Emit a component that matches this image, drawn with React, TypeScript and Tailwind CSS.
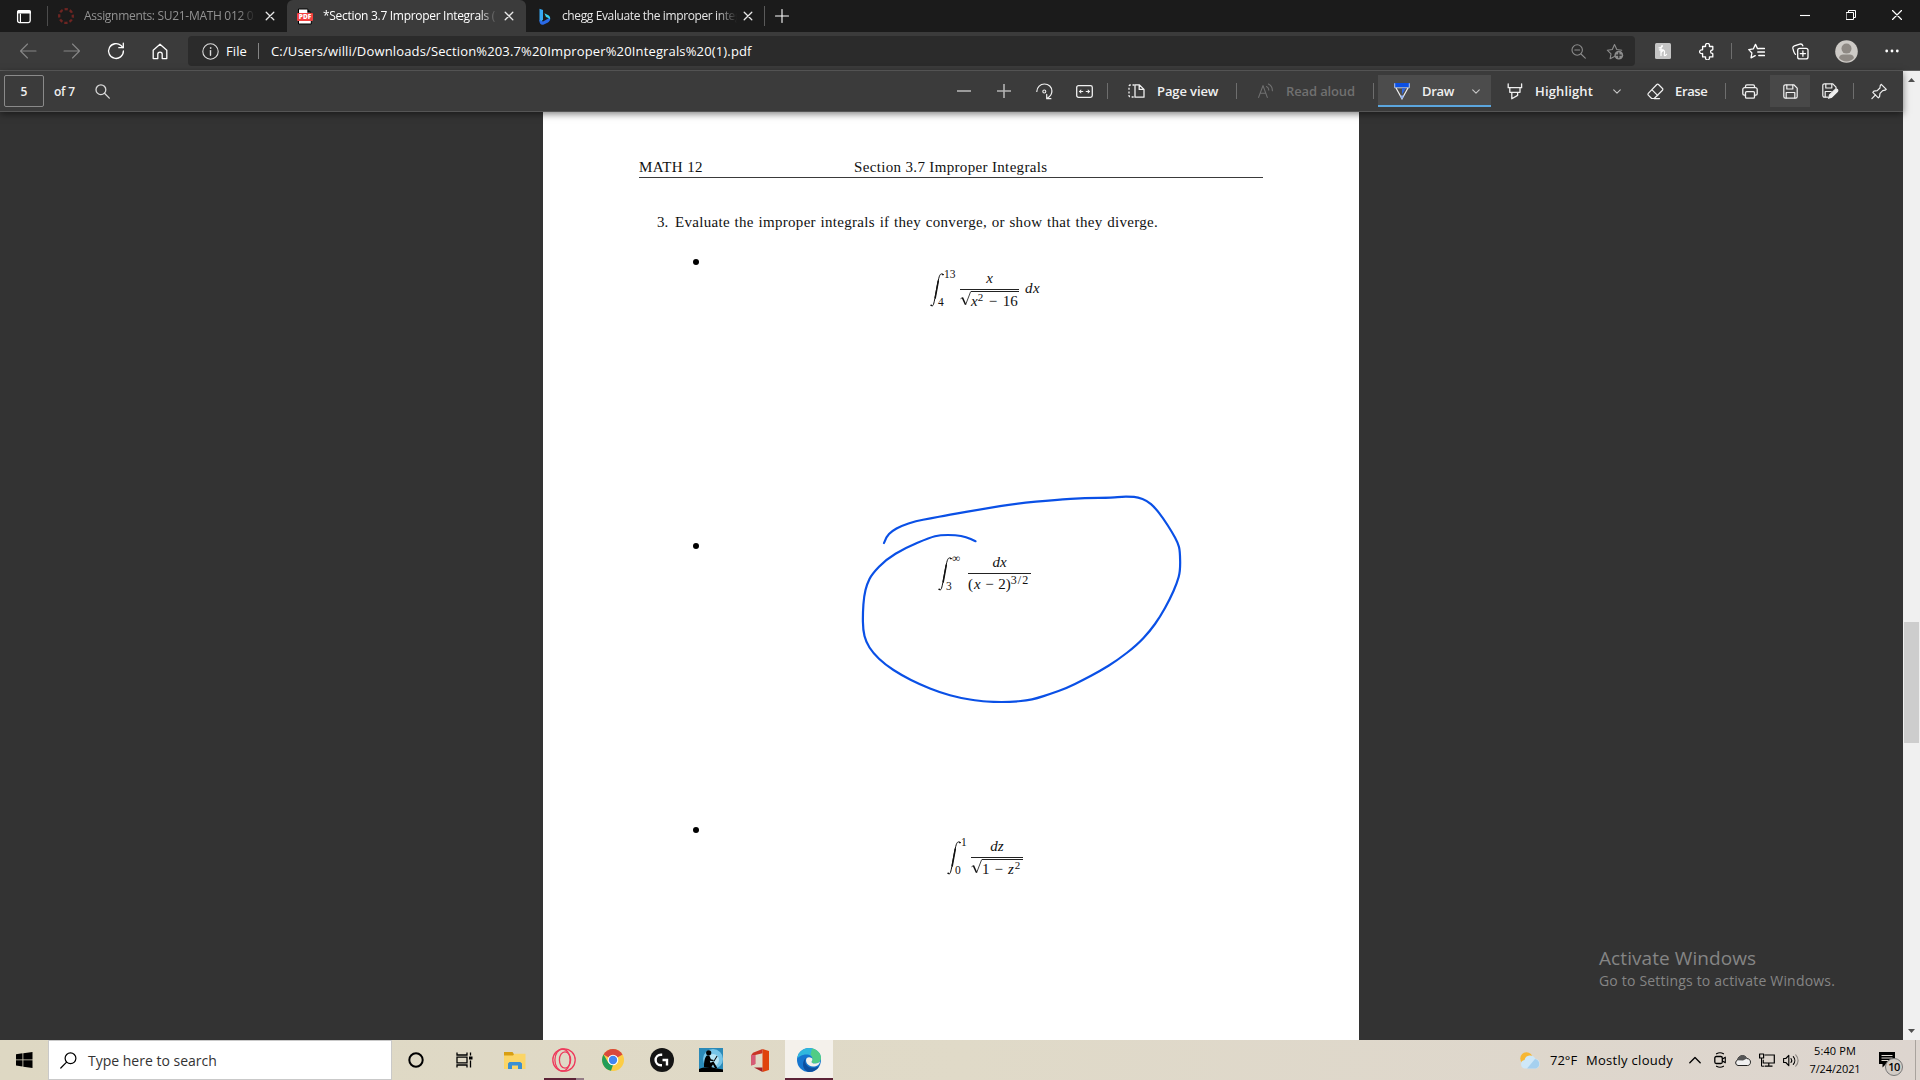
import type { ReactNode } from 'react';

interface IconProps {
  w?: number;
  h?: number;
  className?: string;
  children: ReactNode;
}

/** Thin outline icon, one viewBox unit per pixel */
function Icon({ w = 16, h = 16, className = '', children }: IconProps) {
  return (
    <svg
      width={w}
      height={h}
      viewBox={`0 0 ${w} ${h}`}
      fill="none"
      stroke="currentColor"
      strokeWidth={1.1}
      strokeLinecap="round"
      strokeLinejoin="round"
      className={`shrink-0 ${className}`}
    >
      {children}
    </svg>
  );
}

function Separator({ className = '' }: { className?: string }) {
  return <div className={`w-px h-4 shrink-0 bg-[#6e6e6e] ${className}`} />;
}

function CloseIcon({ className = '' }: { className?: string }) {
  return (
    <Icon w={10} h={10} className={`text-[#e8e8e8] ${className}`}>
      <path d="M1.2 1.2l7.6 7.6M8.8 1.2L1.2 8.8" strokeWidth={1.3} />
    </Icon>
  );
}

function Chevron({ className = '' }: { className?: string }) {
  return (
    <Icon w={8} h={5} className={`text-[#c8c8c8] ${className}`}>
      <path d="M.7.8L4 4.1 7.3.8" />
    </Icon>
  );
}

function TitleBar() {
  return (
    <div className="flex h-8 items-center bg-[#1b1b1b] text-[12px] tracking-[-0.3px]">
      <Icon className="ml-4 text-white" w={16} h={15}>
        <rect x="1.6" y="1.6" width="12.6" height="12" rx="1.8" strokeWidth={1.3} />
        <path d="M1 4.6V3a2 2 0 012-2h10a2 2 0 012 2v1.6z" fill="currentColor" stroke="none" />
        <path d="M4.4 5v8.5" strokeWidth={1.2} />
      </Icon>
      <div className="ml-[15px] h-5 w-px bg-[#4c4c4c]" />

      {/* Inactive Canvas tab */}
      <div className="flex h-8 w-[239px] items-center rounded-br-md">
        <Icon className="ml-[10px] text-[#6e2522]">
          <circle
            cx="8"
            cy="8"
            r="6.8"
            strokeWidth={2.3}
            strokeLinecap="butt"
            strokeDasharray="3.3 2.04"
            strokeDashoffset={1.65}
          />
        </Icon>
        <span className="ml-[10px] w-[172px] overflow-hidden whitespace-nowrap text-[#929292] [mask-image:linear-gradient(to_right,#000_90%,transparent)]">
          Assignments: SU21-MATH 012 01
        </span>
        <CloseIcon className="ml-[9px]" />
      </div>

      {/* Active PDF tab */}
      <div className="flex h-8 w-[239px] items-center rounded-t-md bg-[#3b3b3b] text-white">
        <svg width="16" height="17" viewBox="0 0 16 17" className="ml-[10px] shrink-0">
          <path d="M1.5 1h8.8l4 3.8V16h-12.8z" fill="#fff" stroke="#000" strokeWidth="1" />
          <path d="M10.3 1l4 3.8h-4z" fill="#000" />
          <rect y="5" width="16" height="8" rx="1" fill="#f3403f" />
          <text
            x="8"
            y="11.4"
            textAnchor="middle"
            className="fill-white font-['Open_Sans',sans-serif] text-[6.5px] font-extrabold tracking-normal"
          >
            PDF
          </text>
        </svg>
        <span className="ml-[10px] w-[174px] overflow-hidden whitespace-nowrap [mask-image:linear-gradient(to_right,#000_90%,transparent)]">
          *Section 3.7 Improper Integrals (1
        </span>
        <CloseIcon className="ml-[7px]" />
      </div>

      {/* Bing tab */}
      <div className="flex h-8 w-[238px] items-center">
        <svg width="12" height="17" viewBox="0 0 12 17" className="ml-[13px] shrink-0">
          <path d="M.5.8L4 2.1v9.5L1.7 14.7.5 13z" fill="#36a8f4" />
          <path d="M.5 12l3.5 1.6L11 9.5c.6 2.3-.3 4-2 5L4.3 16.7C2 17.4.5 15.5.5 13z" fill="#2a6ae8" />
          <path d="M5.4 5.3l4 1.9c1.4.8 2 2.2 1.7 4L8.8 9.8 7 9z" fill="#38cfee" />
        </svg>
        <span className="ml-[11px] w-[175px] overflow-hidden whitespace-nowrap text-[#e6e6e6] tracking-[-0.38px] [mask-image:linear-gradient(to_right,#000_88%,transparent)]">
          chegg Evaluate the improper integ
        </span>
        <CloseIcon className="ml-[6px]" />
      </div>
      <div className="h-5 w-px bg-[#5a5a5a]" />
      <Icon w={14} h={14} className="ml-[10px] text-white">
        <path d="M7 .5v13M.5 7h13" />
      </Icon>

      {/* Window controls */}
      <div className="ml-auto mt-[-3px] flex items-center pr-[18px] text-white">
        <Icon w={10} h={10}>
          <path d="M0 5.5h10" strokeLinecap="butt" />
        </Icon>
        <Icon w={10} h={10} className="ml-[36px]">
          <path d="M.5 2.5h7v7h-7zM2.5 2.5v-2h7v7h-2" strokeLinejoin="miter" strokeWidth={1} />
        </Icon>
        <Icon w={10} h={10} className="ml-[36px]">
          <path d="M.5.5l9 9M9.5.5l-9 9" strokeWidth={1.2} />
        </Icon>
      </div>
    </div>
  );
}

function AddressBar() {
  return (
    <div className="flex h-[38px] items-center bg-[#3b3b3b] text-white">
      <Icon w={18} h={16} className="ml-[19px] text-[#868686]">
        <path d="M17 8H1.5M8.5 1L1.5 8l7 7" />
      </Icon>
      <Icon w={18} h={16} className="ml-[26px] text-[#868686]">
        <path d="M1 8h15.5M9.5 1l7 7-7 7" />
      </Icon>
      <Icon w={18} h={18} className="ml-[26px]">
        <path d="M16.4 9A7.4 7.4 0 1114 3.6l2 1.9" strokeWidth={1.3} />
        <path d="M16.3 1.2v4.5h-4.5" strokeWidth={1.3} />
      </Icon>
      <Icon w={16} h={17} className="ml-[27px]">
        <path
          d="M1.2 7.2L8 1.3l6.8 5.9v8.4h-4.6v-4.3a2.2 2.2 0 00-4.4 0v4.3H1.2z"
          strokeWidth={1.3}
        />
      </Icon>

      <div className="ml-5 flex h-[30px] w-[1447px] items-center rounded bg-[#2b2b2b]">
        <Icon w={17} h={17} className="ml-[14px] text-[#dcdcdc]">
          <circle cx="8.5" cy="8.5" r="7.7" />
          <path d="M8.5 7.6v4.6" strokeWidth={1.4} />
          <circle cx="8.5" cy="5" r=".5" fill="currentColor" strokeWidth={0.7} />
        </Icon>
        <span className="ml-[7px] pt-[2px] text-[13px] tracking-[0.11px]">File</span>
        <div className="ml-[11px] h-4 w-px bg-[#858585]" />
        <span className="ml-3 pt-[2px] whitespace-nowrap text-[13px] tracking-[0.15px]">
          C:/Users/willi/Downloads/Section%203.7%20Improper%20Integrals%20(1).pdf
        </span>
        <Icon w={15} h={15} className="ml-auto text-[#8c8c8c]">
          <circle cx="6.2" cy="6" r="5.2" />
          <path d="M10 10l4.3 4.2M3.8 6h4.8" />
        </Icon>
        <Icon w={18} h={17} className="ml-[20px] mr-[11px] text-[#8c8c8c]">
          <path d="M8.5 13.6l-4.4 2.2.9-5L1.3 7.2l5-.7L8.5 1.6l2.3 4.9 5 .7" />
          <circle cx="12.8" cy="12.2" r="4.4" fill="currentColor" stroke="none" />
          <path d="M12.8 9.8v4.8M10.4 12.2h4.8" stroke="#2b2b2b" strokeWidth={1.2} />
        </Icon>
      </div>

      {/* Extensions and profile */}
      <svg width="16" height="16" viewBox="0 0 16 16" className="ml-5 shrink-0">
        <rect width="16" height="16" rx="1.5" fill="#c4c4c4" />
        <path
          d="M4 4.8C6 5 7.6 3.8 7.4 2.8 7.2 2 6 3 6 6v6.5M6 9.8c1-2.3 3.2-3 3.5-1.5.3 1.5-.8 4.3.3 4.3.8 0 1.3-.5 1.8-1.3M4.3 6.8h4"
          fill="none"
          stroke="#fff"
          strokeWidth="1.2"
          strokeLinecap="round"
        />
      </svg>
      <Icon w={16} h={17} className="ml-[28px]">
        <path
          d="M3.6 3.5h2.7c.2 0 .4-.2.3-.5a2 2 0 113.8 0c-.1.3.1.5.3.5h3.1V6.500c0 .3-.2.5-.5.5a1.700 1.700 0 000 3.400c.3 0 .5.2.5.5v3h-3.100c-.2 0-.4.2-.3.4a2 2 0 11-3.800 0c.1-.2-.1-.4-.3-.4H3.600v-3.100c0-.3-.2-.4-.5-.3a1.900 1.900 0 110-3.600c.3.1.5 0 .5-.3z"
          strokeWidth={1.3}
        />
      </Icon>
      <Separator className="ml-4" />
      <Icon w={17} h={16} className="ml-4">
        <path d="M7.2 12.6L3 14.8l.9-4.8L.8 6.6l4.6-.8L7.5 1.4l2 4.2h1.2" strokeWidth={1.3} />
        <path d="M10.8 5.5h5.6M9.8 9h6.6M10.8 12.5h5.6" strokeWidth={1.4} />
      </Icon>
      <Icon w={17} h={17} className="ml-[27px]">
        <rect x="5.7" y="5.3" width="10.3" height="10.6" rx="2" strokeWidth={1.3} />
        <path d="M10.9 8v5.2M8.3 10.6h5.2" strokeWidth={1.3} />
        <path d="M3.5 11.4C2.3 11 1.4 7.5.9 5.4.6 4 1.2 3.2 2.4 2.8l5.4-1.7c1.5-.4 2.5 0 3 1.7" strokeWidth={1.3} />
      </Icon>
      <svg width="23" height="23" viewBox="0 0 23 23" className="ml-[26px] shrink-0">
        <circle cx="11.5" cy="11.5" r="11.3" fill="#cdcac6" />
        <circle cx="11.5" cy="8.6" r="5" fill="#8e8984" />
        <path d="M4 18c.5-3 2.4-3.6 4-3.6h7c1.6 0 3.5.6 4 3.6a10 10 0 01-15 0z" fill="#8e8984" />
      </svg>
      <svg width="14" height="4" viewBox="0 0 14 4" fill="#fff" className="ml-[27px] shrink-0">
        <circle cx="1.7" cy="2" r="1.4" />
        <circle cx="7" cy="2" r="1.4" />
        <circle cx="12.3" cy="2" r="1.4" />
      </svg>
    </div>
  );
}

function PdfToolbar() {
  return (
    <div className="relative z-10 flex h-[41px] items-center border-b border-[#555] bg-[#3b3b3b] text-[13px] font-semibold text-[#f0f0f0] shadow-[0_2px_7px_rgba(0,0,0,0.5)]">
      <div className="ml-1 flex h-8 w-10 items-center justify-center rounded-[2px] border border-[#8a8a8a] pt-px text-[12px]">
        5
      </div>
      <span className="ml-[10px] w-[22px] pt-px whitespace-nowrap text-[12px] tracking-[-0.2px]">of 7</span>
      <Icon w={15} h={15} className="ml-[19px] text-[#d8d8d8]">
        <circle cx="5.9" cy="5.7" r="4.9" strokeWidth={1.3} />
        <path d="M9.5 9.3l4.8 4.8" strokeWidth={1.3} />
      </Icon>

      <Icon w={14} h={14} className="ml-[847px] text-[#b4b4b4]">
        <path d="M0 7h14" strokeWidth={1.6} strokeLinecap="butt" />
      </Icon>
      <Icon w={14} h={14} className="ml-[26px] text-[#b4b4b4]">
        <path d="M0 7h14M7 0v14" strokeWidth={1.6} strokeLinecap="butt" />
      </Icon>
      <Icon w={17} h={17} className="ml-[25px]">
        <path d="M.8 8.5C1 4 4.3 1 8.4 1c4.3 0 7.5 3.1 7.5 7.1 0 3-1.6 5.5-4.4 7" strokeWidth={1.2} />
        <path d="M10.7 11.4v4.3h4.2" strokeWidth={1.2} />
        <circle cx="8.3" cy="8.5" r="1.5" />
      </Icon>
      <Icon w={17} h={13} className="ml-[23px]">
        <rect x=".7" y=".7" width="15.6" height="11.6" rx="1.8" strokeWidth={1.3} />
        <path d="M3.8 6.5h3M13.2 6.5h-3" />
        <path d="M5.2 4.2L2.8 6.5l2.4 2.3zM11.8 4.2l2.4 2.3-2.4 2.3z" fill="currentColor" stroke="none" />
      </Icon>
      <Separator className="ml-[14px]" />
      <Icon w={17} h={14} className="ml-5">
        <path
          d="M6.5 1H2.4A1.4 1.4 0 001 2.4v9.2A1.4 1.4 0 002.4 13h4.1"
          strokeDasharray="2 1.7"
          strokeLinecap="butt"
          strokeWidth={1.3}
        />
        <path d="M7 .8h4.2l4.8 4.6v7.8H7zM11.2.8v4.6H16" strokeWidth={1.3} />
      </Icon>
      <span className="ml-3 w-[62px] pt-px whitespace-nowrap tracking-[-0.1px]">Page view</span>
      <Separator className="ml-[17px]" />
      <Icon w={16} h={16} className="ml-[21px] text-[#707070]">
        <path d="M.6 14.4L5 2.6l4.3 11.8M2.2 10.3h5.5" />
        <path d="M8.5 3.5c1.5.7 2.3 2 2.3 3.6M10.4 1c2.6 1.3 4 3.5 4 6.7" />
      </Icon>
      <span className="ml-3 w-[69px] pt-px whitespace-nowrap tracking-[-0.13px] text-[#707070]">Read aloud</span>
      <Separator className="ml-[18px]" />

      {/* Selected ink tool */}
      <div className="ml-1 flex h-8 w-[113px] items-center border-b-2 border-[#5ba6de] bg-[#4c4c4c]">
        <svg width="16" height="17" viewBox="0 0 16 17" fill="none" className="ml-4 mt-[2px] shrink-0">
          <path d="M0 0h16v4.5H0z" fill="#0a50e6" />
          <path d="M.7.3v4.5h14.6V.3" stroke="#b9c6dc" strokeWidth="1" />
          <path d="M8 11.5V5h4z" fill="#3067e0" />
          <path d="M2 5l6 10.8L14 5" stroke="#f0f0f0" strokeWidth="1.2" />
          <path d="M6 12.5h4L8 16.4z" fill="#8eb0f0" />
        </svg>
        <span className="ml-3 mt-[3px] w-8 whitespace-nowrap tracking-[-0.3px]">Draw</span>
        <Chevron className="ml-[18px] mt-[2px]" />
      </div>
      <Icon w={16} h={17} className="ml-4">
        <path d="M1.2.8v3.9h13.4V.8M2.8 4.7v4.6h10.2V4.7M4.8 9.3v6.5l5.8-3.4V9.3" strokeWidth={1.3} />
      </Icon>
      <span className="ml-[12px] w-[58px] pt-px whitespace-nowrap tracking-[0.14px]">Highlight</span>
      <Chevron className="ml-[20px]" />
      <Icon w={17} h={17} className="ml-[26px]">
        <path
          d="M9.8 1.5a1.2 1.2 0 011.7 0l4 4a1.2 1.2 0 010 1.7l-8.3 8.3H4.6L1.3 12.1a1.2 1.2 0 010-1.7zM4.8 6.6l6 6M7.2 15.6h5.3"
          strokeWidth={1.2}
        />
      </Icon>
      <span className="ml-[11px] w-[33px] pt-px whitespace-nowrap tracking-[-0.35px]">Erase</span>
      <Separator className="ml-[17px]" />
      <Icon w={16} h={15} className="ml-4">
        <path
          d="M3.5 3.6V2.2A1.4 1.4 0 014.9.8h6.2a1.4 1.4 0 011.4 1.4v1.4M3.5 11.2H2.2A1.4 1.4 0 01.8 9.8V5.500a1.9 1.9 0 011.9-1.9h10.6a1.9 1.9 0 011.9 1.9v4.3a1.4 1.4 0 01-1.4 1.4h-1.3"
          strokeWidth={1.3}
        />
        <rect x="3.5" y="7.6" width="9" height="6.6" rx="1.2" strokeWidth={1.3} />
      </Icon>
      <div className="ml-[12px] flex h-8 w-10 items-center justify-center bg-[#484848]">
        <Icon w={15} h={15}>
          <path
            d="M.8 2.4A1.6 1.6 0 012.4.8h8.4l3.4 3.3v8.5a1.6 1.6 0 01-1.6 1.6H2.4a1.6 1.6 0 01-1.6-1.6z"
            strokeWidth={1.2}
          />
          <path d="M3.8 1v4h6V1M3.2 14V8.5h8.6V14" strokeWidth={1.2} />
        </Icon>
      </div>
      <Icon w={17} h={16} className="ml-[12px]">
        <path d="M5.5 14.2H2.4a1.6 1.6 0 01-1.6-1.6V2.4A1.6 1.6 0 012.4.8h8.4l3.2 3.3v1.8" strokeWidth={1.2} />
        <path d="M3.8 1v4h6V1M3.2 14V8.5h6" strokeWidth={1.2} />
        <path d="M6.5 15.3l1-3.4 5.7-5.4a1.5 1.5 0 012.2 2.2L9.8 14.2z" fill="currentColor" />
      </Icon>
      <Separator className="ml-[14px]" />
      <Icon w={17} h={17} className="ml-[17px]">
        <path
          d="M10.3 1.3l5 5-1.2.9-2.4.5-2.7 2.7-.5 3.4-1.2 1-5.5-5.5 1.1-1.1 3.3-.5 2.7-2.7.4-2.5zM4.500 11.9L.9 15.6"
          strokeWidth={1.2}
        />
      </Icon>
    </div>
  );
}

/** Large integral sign */
function IntegralSign() {
  return (
    <svg width="14" height="34" viewBox="0 0 14 34" fill="none" stroke="#111" strokeLinecap="round">
      <path d="M.9 32.2c.8 1.3 2 1 2.6-.8C5.2 26 7.5 8.5 9.4 3.2 10.2.8 11.8.2 13 1.5" strokeWidth="1" />
      <path d="M5.2 25L8.3 8" strokeWidth="1.5" />
      <circle cx="1.2" cy="32.3" r=".4" fill="#111" />
      <circle cx="12.8" cy="1.6" r=".4" fill="#111" />
    </svg>
  );
}

function Radical({ children }: { children: ReactNode }) {
  return (
    <div className="flex">
      <svg width="11" height="16" viewBox="0 0 11 16" fill="none" stroke="#111" className="shrink-0">
        <path d="M.5 8.8l2-1.3" strokeWidth=".8" />
        <path d="M2.4 7.6l3.1 6.9" strokeWidth="1.5" />
        <path d="M5.5 15L10.7 1.5" strokeWidth=".8" />
      </svg>
      <div className="mt-px grow border-t border-[#222] leading-[14px] whitespace-nowrap">{children}</div>
    </div>
  );
}

interface IntegralProps {
  lower: string;
  upper: string;
  numerator: string;
  denominator: ReactNode;
  /** Width of the column that holds the limits */
  limits: string;
  /** Fraction bar width */
  fraction: string;
  tail?: string;
  className: string;
}

function Integral({ lower, upper, numerator, denominator, limits, fraction, tail, className }: IntegralProps) {
  return (
    <div className={`mt-[37px] flex items-start text-[15px] ${className}`}>
      <div className="mt-1">
        <IntegralSign />
      </div>
      <div className={`text-[11.5px] leading-[11px] whitespace-nowrap ${limits}`}>
        <div>{upper}</div>
        <div className="mt-[17px] -ml-[6px]">{lower}</div>
      </div>
      <div className={`mt-px ${fraction}`}>
        <div className="text-center leading-4 italic">{numerator}</div>
        <div className="mt-[3px] h-px bg-[#222]" />
        {denominator}
      </div>
      {tail && <div className="mt-[11px] ml-[6px] leading-4 italic tracking-[0.6px]">{tail}</div>}
    </div>
  );
}

function Bullet({ children }: { children: ReactNode }) {
  return (
    <li className="flex h-[284px] pl-[150px]">
      <div className="mt-[27px] size-[6px] shrink-0 rounded-full bg-black" />
      {children}
    </li>
  );
}

const inkPoints = [
  [884, 543], [886, 537], [892, 531], [901, 526], [916, 521], [930, 518.5], [948, 515], [984, 508.8],
  [1016, 503.5], [1056, 499.8], [1085, 498], [1113, 497.8], [1122, 496.6], [1130, 496.6], [1138, 497.3],
  [1147, 500.7], [1155, 507.7], [1163, 518], [1172, 532], [1178, 543], [1180, 551], [1180.3, 571],
  [1177, 583], [1170, 599], [1160, 617], [1150, 631], [1137, 645], [1117, 660.5], [1100, 671],
  [1083, 680], [1067, 688], [1050, 694], [1037, 698.3], [1027, 700.5], [1010, 702], [993, 702],
  [980, 701], [960, 698], [940, 692.5], [920, 684.5], [902, 675.5], [885, 664.5], [873, 653],
  [866, 642], [863, 630], [862.8, 613], [864, 596], [867, 584], [872, 574], [886, 559.5], [905, 548],
  [930, 537.5], [940, 535], [956, 535], [966, 537], [975.5, 541.2],
];

function toPath(points: number[][]) {
  let d = `M${points[0][0]} ${points[0][1]}`;
  for (let i = 1; i < points.length - 1; i++) {
    const [x, y] = points[i];
    const [nx, ny] = points[i + 1];
    d += `Q${x} ${y} ${(x + nx) / 2} ${(y + ny) / 2}`;
  }
  const last = points[points.length - 1];
  return `${d}L${last[0]} ${last[1]}`;
}

function PdfPage() {
  return (
    <div className="relative ml-[543px] h-[928px] w-[816px] bg-white font-['Liberation_Serif',serif] text-[15px] text-[#111]">
      <div className="flex h-[66px] pt-[45px] mx-[96px] border-b border-[#3a3a3a] leading-5 whitespace-nowrap">
        <span className="w-16 tracking-[0.39px]">MATH 12</span>
        <span className="ml-[151px] tracking-[0.34px]">Section 3.7 Improper Integrals</span>
      </div>
      <div className="mt-[34px] flex pl-[114px] leading-5 whitespace-nowrap">
        <span className="w-[18px]">3.</span>
        <span className="tracking-[0.3px] [word-spacing:0.65px]">
          Evaluate the improper integrals if they converge, or show that they diverge.
        </span>
      </div>
      <ul className="h-[808px] overflow-hidden">
        <Bullet>
          <Integral
            className="ml-[231px]"
            lower="4"
            upper="13"
            numerator="x"
            limits="w-[16px]"
            fraction="w-[59px]"
            tail="dx"
            denominator={
              <Radical>
                <i>x</i>
                <span className="align-[5px] text-[11px] leading-none">2</span>
                <span className="mx-[5.5px]">−</span>16
              </Radical>
            }
          />
        </Bullet>
        <Bullet>
          <Integral
            className="ml-[239px]"
            lower="3"
            upper="∞"
            numerator="dx"
            limits="w-[16px]"
            fraction="w-[63px]"
            denominator={
              <div className="leading-4 whitespace-nowrap">
                (<i className="ml-px">x</i>
                <span className="mx-[4.5px]">−</span>2)
                <span className="align-[5px] text-[12px] leading-none tracking-[1.2px]">3/2</span>
              </div>
            }
          />
        </Bullet>
        <Bullet>
          <Integral
            className="ml-[248px]"
            lower="0"
            upper="1"
            numerator="dz"
            limits="w-[10px]"
            fraction="w-[52px]"
            denominator={
              <Radical>
                1<span className="mx-[5px]">−</span>
                <i>z</i>
                <span className="ml-px align-[5px] text-[11px] leading-none">2</span>
              </Radical>
            }
          />
        </Bullet>
      </ul>

      {/* Pen stroke laid over the page */}
      <svg viewBox="543 112 816 928" className="absolute inset-0 size-full">
        <path d={toPath(inkPoints)} fill="none" stroke="#0a50e6" strokeWidth="2.2" strokeLinecap="round" />
      </svg>
    </div>
  );
}

function ScrollBar() {
  return (
    <div className="flex w-[17px] flex-col items-center bg-[#f0f0f0]">
      <svg width="7" height="4" viewBox="0 0 7 4" fill="#505050" className="mt-[7px]">
        <path d="M0 4L3.5 0 7 4z" />
      </svg>
      <div className="mt-[540px] h-[121px] w-[15px] bg-[#cdcdcd]" />
      <svg width="7" height="4" viewBox="0 0 7 4" fill="#505050" className="mt-auto mb-[7px]">
        <path d="M0 0l3.5 4L7 0z" />
      </svg>
    </div>
  );
}

function Taskbar() {
  return (
    <div className="flex h-10 items-center bg-linear-to-r from-[#ded8c3] via-[#e0dac8] to-[#ddd5cf] text-black">
      <svg width="17" height="16" viewBox="0 0 17 16" className="ml-4 shrink-0">
        <path d="M0 2.2l6.5-.9v6.2H0zM7.3 1.2L16.5 0v7.5H7.3zM0 8.3h6.5v6.2L0 13.6zM7.3 8.3h9.2V16l-9.2-1.3z" />
      </svg>
      <div className="ml-[15px] flex h-10 w-[344px] items-center border border-[#c9c9c9] bg-white">
        <Icon w={17} h={17} className="ml-[11px]">
          <circle cx="10.5" cy="6.3" r="5.4" strokeWidth={1.2} />
          <path d="M6.6 10.2L.8 16" strokeWidth={1.2} />
        </Icon>
        <span className="ml-[11px] text-[14px] text-[#333]">Type here to search</span>
      </div>
      <Icon w={16} h={16} className="ml-4">
        <circle cx="8" cy="8" r="6.7" strokeWidth={2} />
      </Icon>
      <Icon w={17} h={16} className="ml-8">
        <path
          d="M1 .5V3h10V.5M1 15.5V13h10v2.5M1 5.2h10v5.6H1zM14.5.5v3M14.5 8.5v7"
          strokeWidth={1.3}
          strokeLinecap="butt"
          strokeLinejoin="miter"
        />
        <rect x="13" y="4.5" width="3.5" height="3" fill="#000" stroke="none" />
      </Icon>

      {/* File Explorer */}
      <svg width="22" height="19" viewBox="0 0 22 19" className="ml-[31px] shrink-0">
        <path d="M0 1h8.5l1.5 2.2V7H0z" fill="#d89e12" />
        <path d="M0 4.5h9l1.5-1.7h11V18H0z" fill="#fbd567" />
        <path d="M4 18v-5.5l1.5-1.5h10.8l1.7 1.5V18h-4v-3.4H8V18z" fill="#3a8fd3" />
      </svg>

      {/* Opera */}
      <div className="ml-[18px] flex h-10 flex-col justify-end">
        <svg
          width="24"
          height="24"
          viewBox="0 0 24 24"
          fill="none"
          stroke="#ee3a5c"
          strokeWidth="1.3"
          className="ml-2"
        >
          <circle cx="12" cy="12" r="11.2" />
          <ellipse cx="10.5" cy="12" rx="7.6" ry="11" />
          <ellipse cx="13" cy="12" rx="5.6" ry="8.2" />
        </svg>
        <div className="mt-[6px] flex h-[2px]">
          <div className="w-8 bg-[#5c2337]" />
          <div className="w-2 bg-[#957c86]" />
        </div>
      </div>

      {/* Chrome */}
      <svg width="22" height="22" viewBox="0 0 22 22" className="ml-[18px] shrink-0">
        <circle cx="11" cy="11" r="11" fill="#fccd46" />
        <path d="M11 11L1.5 5.5A11 11 0 0120.5 5.5z" fill="#d8483c" />
        <path d="M1.5 5.5l4.8 8.2L11 16l-2 5.8A11 11 0 011.5 5.5z" fill="#229d58" />
        <circle cx="11" cy="11" r="5.3" fill="#fff" />
        <circle cx="11" cy="11" r="4.2" fill="#4486f0" />
      </svg>

      {/* Logitech G HUB */}
      <svg width="24" height="24" viewBox="0 0 24 24" fill="none" className="ml-[26px] shrink-0">
        <circle cx="12" cy="12" r="12" fill="#151515" />
        <path d="M12.2 6.8h-1.4a5.2 5.2 0 000 10.4h1.2M12.5 12h4.5v5.5" stroke="#fff" strokeWidth="2.4" />
      </svg>

      {/* Kindle */}
      <svg width="24" height="24" viewBox="0 0 24 24" className="ml-[25px] shrink-0">
        <rect width="24" height="24" fill="#2b8ab8" />
        <circle cx="14" cy="11" r="10" fill="#76c5e8" />
        <circle cx="14" cy="12" r="6" fill="#b5e4f5" />
        <path d="M0 24v-3c4-2 7-1.5 9-1.5l3-.5 6 1.5 6 1V24z" />
        <circle cx="9.7" cy="4.8" r="2.6" />
        <path d="M5 19c0-5 .5-9.5 3-11.5h2.3l1.6 3.7 2.8.8-.4 1.2-3.5-.5.7 2 3-1.2 4 6.8h-2.5l-2-3.8-2.4 3.8z" />
        <path d="M14.5 13l3.2-5.2.8.5-3.2 5.2z" />
      </svg>

      {/* Office */}
      <svg width="18" height="23" viewBox="0 0 18 23" className="ml-[28px] shrink-0">
        <path d="M11.5 0L18 2v19l-6.5 2z" fill="#e0430c" />
        <path d="M11.5 0L2 3.7.3 6v10.5l4-1.5V6l7.2-1.8z" fill="#c93526" />
        <path d="M.3 6v10.5l4-1.5V6z" fill="#d65b78" />
        <path d="M3 18.5h8.5V23z" fill="#a52226" />
      </svg>

      {/* Edge, focused window */}
      <div className="ml-4 flex h-10 w-12 flex-col justify-end bg-[#f4f1eb]">
        <svg width="24" height="24" viewBox="0 0 24 24" className="ml-3">
          <circle cx="12" cy="12" r="12" fill="#1676cf" />
          <path
            d="M.2 10.5C1 4.3 6 0 12 0c7 0 12 4.7 12 9.8 0 3.4-2.6 5.7-6 5.7-2.2 0-3.5-.8-3.5-1.5 0-.8 1-1 1-3 0-2.5-2.5-4.4-6.2-4.4C5 6.6 1.5 9 .2 10.5z"
            fill="#31b8dd"
          />
          <path
            d="M15 .4c5.2 1.2 9 5 9 9.4 0 3.4-2.6 5.7-6 5.7-2.2 0-3.5-.8-3.5-1.5 0-.8 1-1 1-3 0-2-.5-3-2-4z"
            fill="#5bd368"
            opacity=".75"
          />
          <path
            d="M9 10c-2.5 4 .5 9.8 6.5 9.8 3.3 0 5.3-1 6.8-1.6A12 12 0 0112 24C8.5 23.5 6 20 6 16.5c0-3 1.5-5.5 3-6.5z"
            fill="#0d4f9f"
          />
          <path
            d="M9.8 10c1.5-1.5 5.2-.8 5.6 1 0 2-.9 2.3-.9 3 0 1 1.8 1.7 4 1.5 1.8 0 3.5-.8 4.5-2-.3 3-3 5-7 5-5.5 0-8.5-5.5-6.2-8.5z"
            fill="#f4f1eb"
          />
        </svg>
        <div className="mt-[6px] h-[2px] bg-[#5c2337]" />
      </div>

      {/* Weather */}
      <svg width="21" height="17" viewBox="0 0 21 17" className="ml-auto shrink-0">
        <circle cx="6.5" cy="6.5" r="6.2" fill="#f7b733" />
        <path d="M5 16.5A4.3 4.3 0 014.5 8a5.8 5.8 0 0110.8-1.3A5 5 0 0116 16.5z" fill="#cfe8f8" />
        <path d="M7 16.5l8-9.6A5 5 0 0116 16.5z" fill="#a5d0ef" />
      </svg>
      <span className="ml-[9px] w-[27px] pt-[2px] text-[13px] whitespace-nowrap">72°F</span>
      <span className="ml-[9px] w-[87px] pt-[2px] text-[13px] tracking-[0.29px] whitespace-nowrap">
        Mostly cloudy
      </span>

      {/* Notification area */}
      <Icon w={12} h={8} className="ml-[16px]">
        <path d="M.8 6.8L6 1.5l5.2 5.3" strokeWidth={1.3} />
      </Icon>
      <Icon w={13} h={16} className="ml-[13px]">
        <path d="M2.5 1.8c2-1.2 5-1.2 7 0M2.5 14.2c2 1.2 5 1.2 7 0" />
        <rect x=".8" y="4.5" width="7.5" height="7" rx="1.5" strokeWidth={1.3} />
        <path d="M8.5 7l2.8-1.8v5.6L8.5 9" />
      </Icon>
      <svg width="16" height="11" viewBox="0 0 16 11" className="ml-[8px] shrink-0">
        <path
          d="M3 10.5a2.8 2.8 0 01-.5-5.4C3 2.3 5 .6 7.5.6c2 0 3.5 1 4.4 3 2.2 0 3.6 1.5 3.6 3.5 0 2-1.3 3.4-3 3.4z"
          fill="#f0f0f0"
          stroke="#222"
        />
        <path d="M2.5 5.2C3 2.3 5 .6 7.5.6c2 0 3.5 1 4.4 3L8 5.5z" fill="#555" />
      </svg>
      <Icon w={16} h={14} className="ml-2">
        <path
          d="M5.5 2h9.8v8H4.2V6.8M9.8 10v3M6 13.2h7.5"
          strokeLinecap="butt"
          strokeLinejoin="miter"
          strokeWidth={1.2}
        />
        <rect x=".6" y="1" width="4" height="4" strokeWidth={1.2} />
        <path d="M2.5 5v8.2h3" strokeLinecap="butt" strokeWidth={1} />
      </Icon>
      <Icon w={16} h={13} className="ml-2">
        <path d="M.6 4.5h2.2L5.8 1.3v10.4L2.8 8.5H.6z" />
        <path d="M8 4.5c.9 1.2.9 2.8 0 4M10.3 2.7c2 2.2 2 5.4 0 7.6" />
        <path d="M12.7.9c3.2 3.3 3.2 8 0 11.2" stroke="#8a8580" />
      </Icon>
      <div className="ml-[7px] flex w-[58px] flex-col text-center text-[11px] leading-[18px] whitespace-nowrap">
        <span className="tracking-[0.1px]">5:40 PM</span>
        <span className="tracking-[-0.12px]">7/24/2021</span>
      </div>
      <div className="relative ml-[15px] h-[30px] w-[25px]">
        <svg width="16" height="16" viewBox="0 0 16 16" className="mt-[7px]">
          <path d="M0 0h16v12H7l-3.5 3.500V12H0z" />
          <path d="M2.5 3.5h11M2.5 6h11M2.5 8.5h7" stroke="#e0dad2" strokeWidth="1" />
        </svg>
        <div className="absolute top-[13px] left-[6px] flex size-[18px] items-center justify-center rounded-full border border-[#777] bg-[#d2ccc6] text-[11px] font-semibold tracking-[-0.5px]">
          10
        </div>
      </div>
      <div className="ml-[11px] mr-1 h-10 w-px bg-[#a9a39d]" />
    </div>
  );
}

export default function App() {
  return (
    <div className="flex h-[1080px] w-[1920px] flex-col overflow-hidden bg-[#333] font-['Open_Sans','Noto_Sans',sans-serif]">
      <TitleBar />
      <AddressBar />
      <div className="h-px bg-[#5f5f5f]" />
      <div className="flex h-[969px]">
        <div className="relative flex w-[1903px] flex-col">
          <PdfToolbar />
          <PdfPage />
          {/* Activation watermark */}
          <div className="absolute top-[874px] left-[1599px] whitespace-nowrap text-[#858585]">
            <div className="text-[19px] leading-[26px] tracking-[0.08px]">Activate Windows</div>
            <div className="text-[14px] leading-5 tracking-[0.19px]">Go to Settings to activate Windows.</div>
          </div>
        </div>
        <ScrollBar />
      </div>
      <Taskbar />
    </div>
  );
}
